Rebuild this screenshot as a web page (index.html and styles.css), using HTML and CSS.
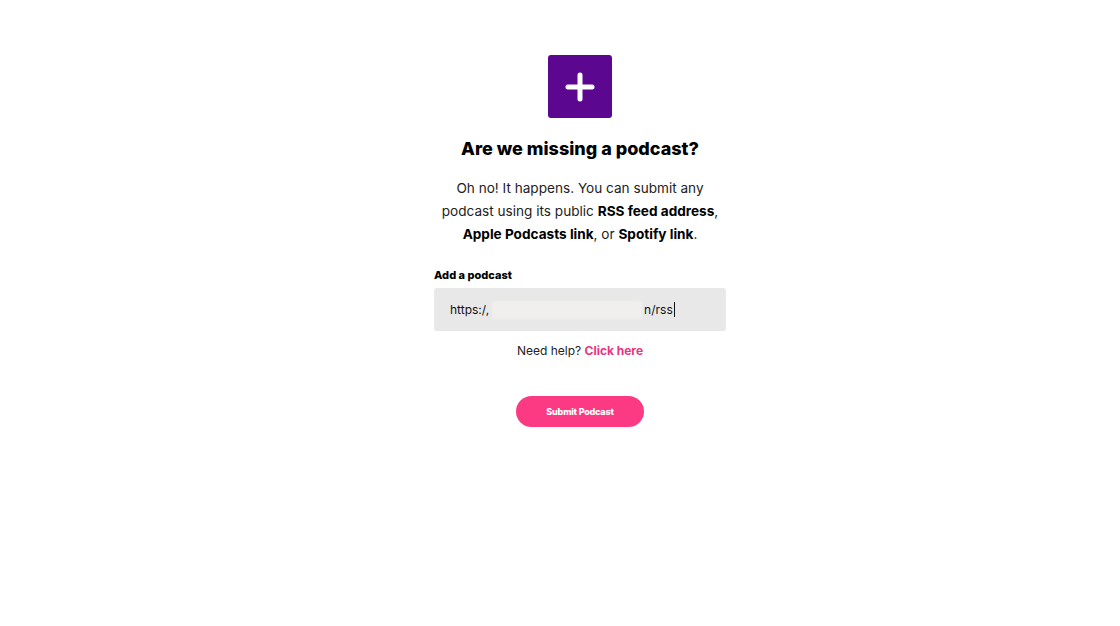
FILE: index.html
```html
<!DOCTYPE html>
<html lang="en">
<head>
<meta charset="utf-8">
<title>Add a podcast</title>
<link rel="stylesheet" href="styles.css">
</head>
<body>
<main class="page">
  <section class="card">
    <div class="icon-box">
      <svg width="30" height="30" viewBox="0 0 30 30" aria-hidden="true">
        <path d="M15 3v24M3 15h24" stroke="#fff" stroke-width="5" stroke-linecap="round" fill="none"/>
      </svg>
    </div>
    <h1 class="title">Are we missing a podcast?</h1>
    <p class="intro">Oh no! It happens. You can submit any podcast using its public <strong>RSS feed address</strong>, <strong>Apple Podcasts link</strong>, or <strong>Spotify link</strong>.</p>
    <form class="form">
      <label class="label">Add a podcast</label>
      <div class="input">
        <span class="val">https:/,</span><span class="redact"></span><span class="val">n/rss</span><span class="caret"></span>
      </div>
      <p class="help">Need help? <a class="link" href="#">Click here</a></p>
      <button class="submit" type="button">Submit Podcast</button>
    </form>
  </section>
</main>
</body>
</html>
```

FILE: styles.css
```css
html, body {
  margin: 0;
  padding: 0;
  background: #fff;
}
body {
  font-family: "Inter", "Noto Sans", sans-serif;
  color: #1a1a1a;
}
.page {
  display: flex;
  justify-content: center;
  padding-left: 40px;
  padding-top: 55px;
}
.card {
  width: 292px;
  display: flex;
  flex-direction: column;
  align-items: center;
}
.icon-box {
  width: 64px;
  height: 63px;
  background: #5c0790;
  border-radius: 3px;
  display: flex;
  align-items: center;
  justify-content: center;
}
.title {
  margin: 19px 0 0;
  font-size: 18px;
  line-height: 24px;
  font-weight: 800;
  color: #000;
  letter-spacing: 0;
}
.intro {
  margin: 16px 0 0;
  width: 292px;
  text-align: center;
  font-size: 13.6px;
  line-height: 23px;
  color: #222;
}
.intro strong {
  font-weight: 700;
  color: #000;
}
.form {
  width: 100%;
  margin-top: 22px;
  display: flex;
  flex-direction: column;
  align-items: center;
}
.label {
  align-self: flex-start;
  font-size: 11px;
  font-weight: 800;
  color: #000;
  line-height: 14px;
}
.input {
  align-self: stretch;
  margin-top: 6px;
  height: 43px;
  background: #e8e8e8;
  border-radius: 3px;
  display: flex;
  align-items: center;
  padding-left: 16px;
  font-size: 12px;
  color: #111;
}
.redact {
  width: 150px;
  height: 18px;
  background: #f1efee;
  filter: blur(1.5px);
  margin: 0 2px 0 3px;
}
.caret {
  width: 1px;
  height: 15px;
  background: #111;
  margin-left: 1px;
}
.help {
  margin: 12px 0 0;
  font-size: 12px;
  line-height: 16px;
  color: #222;
}
.link {
  color: #e8357f;
  font-weight: 700;
  text-decoration: none;
}
.submit {
  margin-top: 37px;
  width: 128px;
  height: 31px;
  border: 0;
  border-radius: 16px;
  background: #fc3a84;
  color: #fff;
  font-family: "Inter", "Noto Sans", sans-serif;
  font-weight: 800;
  font-size: 9px;
  letter-spacing: -0.2px;
  cursor: pointer;
}
```
